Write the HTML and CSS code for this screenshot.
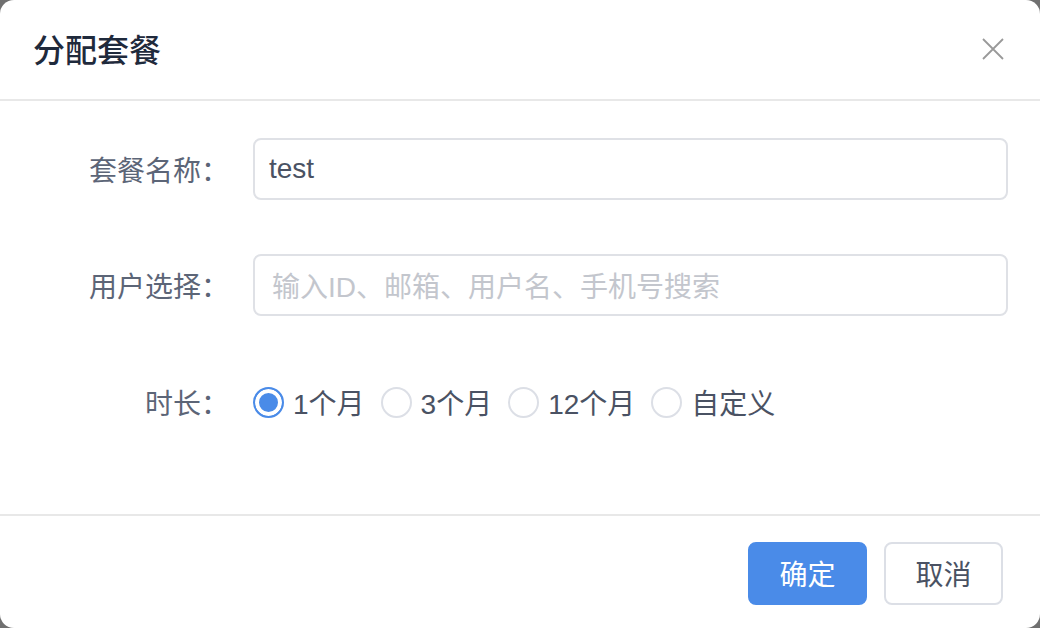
FILE: index.html
```html
<!DOCTYPE html>
<html lang="zh-CN">
<head>
<meta charset="utf-8">
<link rel="stylesheet" href="styles.css">
</head>
<body>
<div class="dialog">
  <div class="dialog-header">
    <span class="dialog-title">分配套餐</span>
    <span class="dialog-close">
      <svg width="22" height="22" viewBox="0 0 22 22"><path d="M1 1L21 21M21 1L1 21" stroke="#999" stroke-width="1.8" fill="none"/></svg>
    </span>
  </div>
  <div class="dialog-body">
    <div class="form-row">
      <label class="form-label">套餐名称：</label>
      <div class="form-control"><div class="input">test</div></div>
    </div>
    <div class="form-row">
      <label class="form-label">用户选择：</label>
      <div class="form-control"><div class="input placeholder">输入ID、邮箱、用户名、手机号搜索</div></div>
    </div>
    <div class="form-row form-row-radio">
      <label class="form-label">时长：</label>
      <div class="form-control radios">
        <span class="radio checked"><span class="radio-circle"></span><span class="radio-text">1个月</span></span>
        <span class="radio"><span class="radio-circle"></span><span class="radio-text">3个月</span></span>
        <span class="radio"><span class="radio-circle"></span><span class="radio-text">12个月</span></span>
        <span class="radio"><span class="radio-circle"></span><span class="radio-text">自定义</span></span>
      </div>
    </div>
  </div>
  <div class="dialog-footer">
    <button class="btn btn-primary">确定</button>
    <button class="btn btn-default">取消</button>
  </div>
</div>
</body>
</html>
```

FILE: styles.css
```css
* { box-sizing: border-box; }
html, body {
  margin: 0;
  padding: 0;
  background: #707070;
  width: 1040px;
  height: 628px;
  overflow: hidden;
}
body {
  font-family: "Liberation Sans", "Noto Sans CJK SC", sans-serif;
}
.dialog {
  width: 1040px;
  height: 628px;
  background: #fff;
  border-radius: 14px;
  display: flex;
  flex-direction: column;
}
.dialog-header {
  height: 101px;
  border-bottom: 2px solid #e8e8e8;
  display: flex;
  align-items: center;
  justify-content: space-between;
  padding: 0 36px 0 33px;
}
.dialog-title {
  font-size: 32px;
  font-weight: 500;
  color: #1f2a3c;
  margin-top: -4px;
}
.dialog-close {
  display: flex;
  margin-top: -2px;
}
.dialog-body {
  flex: 1;
  padding-top: 37px;
  display: flex;
  flex-direction: column;
  gap: 54px;
}
.form-row {
  display: flex;
  align-items: center;
  height: 62px;
}
.form-row-radio {
  height: 64px;
}
.form-label {
  width: 253px;
  padding-right: 24px;
  text-align: right;
  font-size: 28px;
  color: #5c6577;
}
.form-control {
  width: 755px;
}
.input {
  height: 62px;
  border: 2px solid #dfe1e6;
  border-radius: 8px;
  display: flex;
  align-items: center;
  padding-left: 14px;
  font-size: 28px;
  color: #4a5263;
}
.input.placeholder {
  color: #c3c6cd;
  padding-left: 17px;
}
.radios {
  display: flex;
  align-items: center;
}
.radio {
  display: flex;
  align-items: center;
  margin-right: 16px;
  font-size: 28px;
  color: #4a5263;
}
.radio-circle {
  width: 31px;
  height: 31px;
  border: 2px solid #dcdfe6;
  border-radius: 50%;
  margin-right: 9px;
  background: #fff;
}
.radio.checked .radio-circle {
  border-color: #4a8be8;
  background: #4a8be8;
  box-shadow: inset 0 0 0 4px #fff;
}
.dialog-footer {
  height: 114px;
  border-top: 2px solid #e8e8e8;
  display: flex;
  justify-content: flex-end;
  align-items: center;
  gap: 17px;
  padding-right: 37px;
  padding-top: 2px;
}
.btn {
  width: 119px;
  height: 63px;
  border-radius: 8px;
  font-size: 28px;
  font-family: inherit;
  cursor: pointer;
}
.btn-primary {
  background: #4a8be8;
  border: 2px solid #4a8be8;
  color: #fff;
}
.btn-default {
  background: #fff;
  border: 2px solid #dcdfe6;
  color: #4a5263;
}
```
